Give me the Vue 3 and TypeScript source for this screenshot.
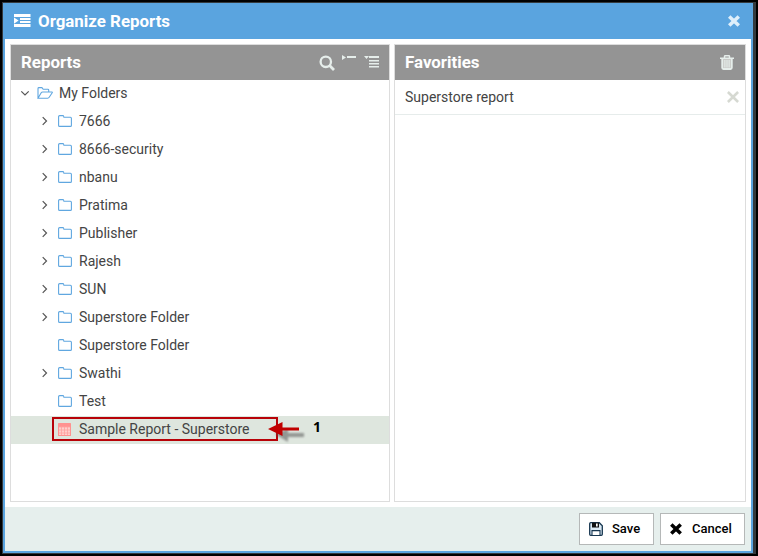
<script setup lang="ts">
interface TreeItem {
  name: string
  expandable: boolean
}

const folders: TreeItem[] = [
  { name: '7666', expandable: true },
  { name: '8666-security', expandable: true },
  { name: 'nbanu', expandable: true },
  { name: 'Pratima', expandable: true },
  { name: 'Publisher', expandable: true },
  { name: 'Rajesh', expandable: true },
  { name: 'SUN', expandable: true },
  { name: 'Superstore Folder', expandable: true },
  { name: 'Superstore Folder', expandable: false },
  { name: 'Swathi', expandable: true },
  { name: 'Test', expandable: false },
]
const gridLines: number[] = [3, 6, 9]
</script>

<template>
  <div class="frame">
    <div class="dialog">
      <header class="titlebar">
        <svg class="title-icon" width="17" height="14" viewBox="0 0 17 14">
          <path fill="#fff" d="M0 0h16.5v3H0zM6 4h10.5v2H6zM6 7h10.5v2H6zM0 10h16.5v3H0zM0 3.4l4.6 3.2L0 9.8z" />
        </svg>
        <h1>Organize Reports</h1>
        <svg class="close" width="12" height="12" viewBox="0 0 12 12">
          <path stroke="#deeffb" stroke-width="3.6" d="M1.2 1.5l9.6 9M10.8 1.5l-9.6 9" />
        </svg>
      </header>

      <main class="body">
        <section class="panel reports">
          <div class="panel-head">
            <h2>Reports</h2>
            <svg width="16" height="16" viewBox="0 0 16 16" class="search" fill="none" stroke="#e6eeeb">
              <circle cx="6.8" cy="6.8" r="5.2" stroke-width="2.3" />
              <path d="M10.6 10.6l4.4 4.3" stroke-width="2.8" />
            </svg>
            <svg width="14" height="15" viewBox="0 0 14 15" class="collapse" fill="#e6eeeb">
              <path d="M0 0l4 2.5L0 5zM5 1h9v2H5z" />
            </svg>
            <svg width="15" height="13" viewBox="0 0 15 13" class="expand" fill="#e6eeeb">
              <path d="M0 0h5L2.5 3zM5 0h10v2H5zM5 4h10v1.6H5zM5 7h10v1.6H5zM5 10h10v1.6H5z" />
            </svg>
          </div>
          <ul class="tree">
            <li class="root">
              <svg class="arrow" width="10" height="10" viewBox="0 0 10 10" fill="none" stroke="#555" stroke-width="1.2">
                <path d="M1.3 3.3L5 7l3.7-3.7" />
              </svg>
              <svg class="open-folder" width="16" height="12" viewBox="0 0 16 12" fill="none" stroke="#60a7e0" stroke-width="1.1">
                <path d="M1 11V1.5q0-.9.9-.9h3l1.3 1.7h4.7q.8 0 .8.8v1.7M1 11.2l3.2-5.4q.5-.8 1.4-.8H15q.6 0 .2.7l-3 4.6q-.6.9-1.5.9z" />
              </svg>
              <span>My Folders</span>
            </li>
            <li v-for="(item, i) in folders" :key="i">
              <svg class="arrow" :class="{ leaf: !item.expandable }" width="10" height="10" viewBox="0 0 10 10" fill="none" stroke="#555" stroke-width="1.2">
                <path d="M2.7 1.2L6.5 5 2.7 8.8" />
              </svg>
              <svg class="folder" width="14" height="12" viewBox="0 0 14 12" fill="none" stroke="#60a7e0" stroke-width="1.1">
                <path d="M.6 10.4V1.7q0-1.1 1-1.1h3.1q.9 0 1 .8l.2.9h6.5q1 0 1 1v7.1q0 1-1 1H1.6q-1 0-1-1z" />
              </svg>
              <span>{{ item.name }}</span>
            </li>
            <li class="selected">
              <span class="outline"></span>
              <svg class="report" width="13" height="13" viewBox="0 0 13 13">
                <rect width="13" height="13" rx=".6" fill="#ff9290" />
                <path fill="#ffcfcb" d="M1 4h11v8H1z" />
                <path v-for="n in gridLines" :key="n" :d="`M${n + .5} 4v8M1 ${n + 1}h11`" stroke="#ffa19e" stroke-width=".8" />
              </svg>
              <span>Sample Report - Superstore</span>
              <svg class="pointer" width="48" height="26" viewBox="0 0 48 26">
                <defs>
                  <filter id="soft" x="-20%" y="-30%" width="140%" height="160%">
                    <feGaussianBlur stdDeviation="1.3" />
                  </filter>
                </defs>
                <path d="M8 14l13-5v4h16v4H21v5z" fill="#555" opacity=".55" filter="url(#soft)" />
                <path d="M1 9L15.5 2v5.5H32v3H15.5V16z" fill="#c00000" />
              </svg>
              <b class="marker">1</b>
            </li>
          </ul>
        </section>

        <section class="panel favorites">
          <div class="panel-head">
            <h2>Favorities</h2>
            <svg width="14" height="15" viewBox="0 0 14 15" fill="none" stroke="#e6eeeb">
              <path d="M2.5 4h9v10h-9z" fill="#c9cac8" stroke="none" />
              <path d="M0 3.2h14M4.5 3V1.5q0-.8.8-.8h3.4q.8 0 .8.8V3" stroke-width="1.5" />
              <path d="M2.2 4v8.8q0 1.2 1.2 1.2h7.2q1.2 0 1.2-1.2V4" stroke-width="1.8" />
              <path d="M4.9 5v7.5M7 5v7.5M9.1 5v7.5" stroke-width="1.1" />
            </svg>
          </div>
          <div class="favorite">
            <span>Superstore report</span>
            <svg width="12" height="12" viewBox="0 0 12 12">
              <path stroke="#d6d9d2" stroke-width="2.6" d="M.9 1l10.2 10M11.1 1L.9 11" />
            </svg>
          </div>
        </section>
      </main>

      <footer class="footer">
        <button class="save" type="button">
          <svg width="14" height="14" viewBox="0 0 14 14">
            <path d="M.7 1.7q0-1 1-1h8.6l3 3v8.6q0 1-1 1H1.7q-1 0-1-1z" fill="#dbeaf5" stroke="#173650" stroke-width="1.3" />
            <path d="M3 .7h7v4.8H3z" fill="#111" />
            <path d="M7 1.5h1.7v3H7z" fill="#fff" />
            <path d="M3 13V8.6h8V13" fill="#fff" stroke="#173650" stroke-width="1.1" />
          </svg>
          <span>Save</span>
        </button>
        <button class="cancel" type="button">
          <svg width="12" height="12" viewBox="0 0 12 12">
            <path stroke="#000" stroke-width="3.5" d="M1.3 1.4l9.4 9.2M10.7 1.4l-9.4 9.2" />
          </svg>
          <span>Cancel</span>
        </button>
      </footer>
    </div>
  </div>
</template>

<style>
body {
  margin: 0;
  background: #000;
}
</style>

<style scoped>
* {
  box-sizing: border-box;
}
svg {
  display: block;
  flex: none;
}
.frame {
  width: 758px;
  height: 556px;
  padding: 2px;
  background: #000;
  font-family: Roboto, "Liberation Sans", sans-serif;
  color: #444;
}
.dialog {
  height: 552px;
  display: flex;
  flex-direction: column;
  border: 1px solid #343a3e;
  border-right-width: 3px;
  background: #5aa4df;
  padding: 0 2px 2px;
}
.titlebar {
  height: 36px;
  flex: none;
  display: flex;
  align-items: center;
  padding: 0 11px 0 9px;
}
h1, h2 {
  margin: 0;
  font-size: 16.9px;
  line-height: 20px;
  font-weight: 700;
  color: #fff;
}
h1 {
  flex: 1;
  margin-left: 7px;
}
.body {
  flex: 1;
  display: flex;
  gap: 4px;
  padding: 5px;
  background: #fff;
}
.panel {
  border: 1px solid #ddd;
}
.reports {
  width: 380px;
}
.favorites {
  flex: 1;
}
.panel-head {
  height: 35px;
  display: flex;
  align-items: center;
  padding: 0 11px 0 10px;
  background: #949494;
}
.reports .panel-head {
  padding-right: 10px;
}
.panel-head h2 {
  flex: 1;
  padding-bottom: 2px;
}
.search {
  margin-right: 7px;
}
.collapse {
  margin-right: 8px;
}
.tree {
  list-style: none;
  margin: 0;
  padding: 0;
}
.tree li {
  height: 28px;
  display: flex;
  align-items: center;
  padding: 0 0 2px 29px;
  font-size: 14px;
}
.tree .root {
  padding-left: 9px;
}
.arrow {
  margin-right: 8px;
}
.leaf {
  visibility: hidden;
}
.folder {
  margin-right: 7px;
}
.open-folder {
  margin-left: -1px;
  margin-right: 6px;
}
.tree .selected {
  position: relative;
  padding-left: 47px;
  background: #dee6de;
}
.report {
  margin-right: 8px;
}
.outline {
  position: absolute;
  left: 41px;
  top: 1px;
  width: 226px;
  height: 24px;
  border: 2px solid #b80208;
}
.pointer {
  position: absolute;
  left: 256px;
  top: 4px;
}
.marker {
  position: absolute;
  left: 302px;
  top: 2px;
  font: bold 14px/18px "Noto Sans", sans-serif;
  color: #000;
}
.favorite {
  height: 35px;
  display: flex;
  align-items: center;
  justify-content: space-between;
  padding: 0 6px 0 10px;
  border-bottom: 1px solid #e6eceb;
  font-size: 14px;
}
.footer {
  height: 44px;
  flex: none;
  display: flex;
  justify-content: flex-end;
  align-items: flex-start;
  gap: 6px;
  padding: 6px 6px 0;
  background: #e6efed;
}
button {
  height: 32px;
  display: flex;
  align-items: center;
  padding: 0 0 0 9px;
  border: 1px solid #b5b8b8;
  background: #fff;
  color: #000;
  font: 500 13px Roboto, "Liberation Sans", sans-serif;
}
.save {
  width: 75px;
}
.cancel {
  width: 85px;
}
button span {
  padding-bottom: 2px;
}
.save span {
  margin-left: 9px;
}
.cancel span {
  margin-left: 10px;
}
</style>
